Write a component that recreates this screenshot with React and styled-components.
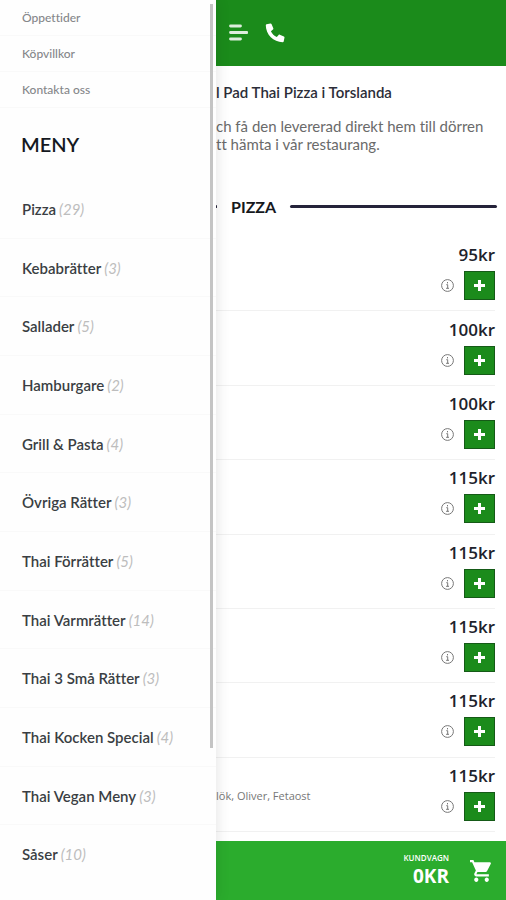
import React from "react";
import styled, { createGlobalStyle } from "styled-components";

const GlobalStyle = createGlobalStyle`
  *, *::before, *::after { box-sizing: border-box; }
  body { margin: 0; background: #fff; font-family: Lato, sans-serif; font-variant-ligatures: none; color: #1f2329; }
  button { font: inherit; padding: 0; border: 0; background: none; cursor: pointer; }
  a { color: inherit; text-decoration: none; }
  h1, h2, p, ul { margin: 0; padding: 0; }
  ul { list-style: none; }
`;

const Shell = styled.div`
  display: grid;
  grid-template-columns: 216px minmax(0, 1fr);
  min-height: 100vh;
`;

const Drawer = styled.nav`
  position: relative;
  z-index: 1;
  display: flex;
  flex-direction: column;
  padding-bottom: 17px;
  background: #fefefe;
  box-shadow: 0 0 14px rgba(0, 0, 0, 0.12);
`;

const ScrollThumb = styled.span`
  position: absolute;
  top: 4px;
  bottom: 152px;
  right: 3px;
  width: 3px;
  background: #c4c4c4;
`;

const InfoLink = styled.a`
  display: flex;
  align-items: center;
  height: 36px;
  padding: 0 22px;
  border-bottom: 1px solid #f9f9f9;
  font-size: 12px;
  font-weight: 500;
  color: #85878a;
`;

const MenuTitle = styled.h2`
  padding: 24px 21px 23px;
  font-size: 20px;
  line-height: 25px;
  font-weight: 600;
  color: #15191f;
`;

const Categories = styled.ul`
  flex: 1;
  display: flex;
  flex-direction: column;
`;

const Category = styled.li`
  flex: 1;
  display: flex;
  border-bottom: 1px solid #f9f9f9;

  &:last-child { border-bottom: 0; }
`;

const CategoryLink = styled.a`
  flex: 1;
  display: flex;
  align-items: center;
  gap: 3px;
  padding: 0 22px;
  font-size: 15px;
  font-weight: 600;
  color: #3a3e43;
  white-space: nowrap;
`;

const Count = styled.em`
  font-weight: 400;
  color: #bdbdbd;
`;

const Page = styled.div`
  display: flex;
  flex-direction: column;
  min-width: 0;
`;

const TopBar = styled.header`
  display: flex;
  align-items: center;
  gap: 17px;
  height: 66px;
  padding: 0 12px;
  background: #1b8b1b;
`;

const IconButton = styled.button`
  display: flex;
  color: #fff;
`;

const Intro = styled.section`
  padding: 16px 12px 0 0;
`;

const Heading = styled.h1`
  font-size: 15px;
  line-height: 20px;
  font-weight: 600;
  color: #2b2d38;
`;

const Lead = styled.p`
  padding-top: 15px;
  font-size: 15px;
  line-height: 18px;
  color: #6a6a6a;
  white-space: nowrap;
`;

const SectionTitle = styled.div`
  display: flex;
  align-items: center;
  gap: 14px;
  padding: 43px 9px 20px 0;

  &::before,
  &::after {
    content: "";
    height: 3px;
    border-radius: 2px;
    background: #25233a;
  }

  &::before { width: 1px; }
  &::after { flex: 1; }
`;

const SectionName = styled.h2`
  font-size: 16px;
  line-height: 21px;
  font-weight: 700;
  color: #16181d;
`;

const Products = styled.ul`
  flex: 1;
  display: flex;
  flex-direction: column;
  padding-right: 11px;
`;

const Product = styled.li`
  flex: 1;
  display: flex;
  align-items: center;
  justify-content: space-between;
  border-bottom: 1px solid #f1f1f1;
`;

const Toppings = styled.p`
  padding-top: 4px;
  font: 11px/16px "Open Sans", sans-serif;
  color: #777;
`;

const Buy = styled.div`
  display: flex;
  flex-direction: column;
  align-items: flex-end;
  gap: 6px;
  margin-left: auto;
  padding-bottom: 2px;
`;

const Price = styled.span`
  font: 600 17px/20px "Open Sans", sans-serif;
  color: #20222b;
`;

const Actions = styled.div`
  display: flex;
  align-items: center;
  gap: 10px;
`;

const InfoButton = styled.button`
  display: flex;
  color: #777;
`;

const AddButton = styled.button`
  && {
    display: flex;
    align-items: center;
    justify-content: center;
    width: 31px;
    height: 29px;
    border: 1px solid #155a17;
    background: #1b8b1b;
    color: #fff;
  }
`;

const CartBar = styled.footer`
  display: flex;
  align-items: center;
  justify-content: flex-end;
  height: 59px;
  margin-top: 9px;
  padding: 0 14px;
  background: #2bac2d;
`;

const CartButton = styled.button`
  && {
    display: flex;
    align-items: center;
    gap: 21px;
    color: #fff;
    text-align: right;
  }
`;

const CartText = styled.span`
  display: flex;
  flex-direction: column;
  font-family: "Open Sans", sans-serif;
`;

const CartLabel = styled.span`
  font-size: 8px;
  line-height: 11px;
  font-weight: 600;
`;

const CartTotal = styled.span`
  font-size: 19px;
  line-height: 26px;
  font-weight: 700;
`;

const MenuIcon = () => (
  <svg width="20" height="18" viewBox="0 0 20 18" fill="none" stroke="currentColor" strokeWidth="2.8" strokeLinecap="round" opacity="0.85" aria-hidden="true">
    <path d="M2.500 2H12.500M2.500 8.500H19M2.500 15H12.500" />
  </svg>
);

const PhoneIcon = () => (
  <svg width="20" height="20" viewBox="0 0 20 20" fill="currentColor" aria-hidden="true">
    <path d="M1.600 1.300 5.400.5c.5-.1.9.1 1.100.6l1.800 4.100c.2.4.1.9-.3 1.200L5.900 8.200c1.200 2.600 3.300 4.600 5.900 5.900l1.800-2.100c.3-.4.8-.5 1.200-.3l4.100 1.800c.5.2.7.7.6 1.100l-.8 3.800c-.1.5-.5.8-1 .8C8.500 19.200.8 11.500.8 2.300c0-.5.3-.9.8-1z" />
  </svg>
);

const InfoIcon = () => (
  <svg width="13" height="13" viewBox="0 0 13 13" fill="none" stroke="currentColor" aria-hidden="true">
    <circle cx="6.500" cy="6.500" r="5.900" />
    <path d="M5.300 5.700h1.400v3.600M5.100 9.300h2.900M6.500 3v1.400" />
  </svg>
);

const PlusIcon = () => (
  <svg width="11" height="11" viewBox="0 0 11 11" stroke="currentColor" strokeWidth="3" aria-hidden="true">
    <path d="M5.500 0v11M0 5.500h11" />
  </svg>
);

const CartIcon = () => (
  <svg width="22" height="22" viewBox="1 2 21 20" preserveAspectRatio="none" fill="currentColor" aria-hidden="true">
    <path d="M7 18c-1.100 0-1.990.9-1.990 2S5.900 22 7 22s2-.9 2-2-.9-2-2-2zM1 2v2h2l3.600 7.590-1.350 2.450c-.16.280-.25.610-.25.960 0 1.100.9 2 2 2h12v-2H7.420c-.14 0-.25-.11-.25-.25l.03-.12.9-1.630h7.450c.75 0 1.410-.41 1.750-1.030l3.580-6.490A1 1 0 0 0 20 4H5.210l-.94-2H1zm16 16c-1.100 0-1.990.9-1.990 2s.89 2 1.990 2 2-.9 2-2-.9-2-2-2z" />
  </svg>
);

const infoLinks = ["Öppettider", "Köpvillkor", "Kontakta oss"];

const categories = [
  ["Pizza", 29],
  ["Kebabrätter", 3],
  ["Sallader", 5],
  ["Hamburgare", 2],
  ["Grill & Pasta", 4],
  ["Övriga Rätter", 3],
  ["Thai Förrätter", 5],
  ["Thai Varmrätter", 14],
  ["Thai 3 Små Rätter", 3],
  ["Thai Kocken Special", 4],
  ["Thai Vegan Meny", 3],
  ["Såser", 10],
];

const products = [
  { price: 95 },
  { price: 100 },
  { price: 100 },
  { price: 115 },
  { price: 115 },
  { price: 115 },
  { price: 115 },
  { price: 115, toppings: "lök, Oliver, Fetaost" },
];

export default function App() {
  return (
    <>
      <GlobalStyle />
      <Shell>
        <Drawer>
          {infoLinks.map((label) => (
            <InfoLink href="#" key={label}>{label}</InfoLink>
          ))}
          <MenuTitle>MENY</MenuTitle>
          <Categories>
            {categories.map(([name, count]) => (
              <Category key={name}>
                <CategoryLink href="#">
                  {name} <Count>({count})</Count>
                </CategoryLink>
              </Category>
            ))}
          </Categories>
          <ScrollThumb />
        </Drawer>
        <Page>
          <TopBar>
            <IconButton aria-label="Meny"><MenuIcon /></IconButton>
            <IconButton aria-label="Ring oss"><PhoneIcon /></IconButton>
          </TopBar>
          <Intro>
            <Heading>l Pad Thai Pizza i Torslanda</Heading>
            <Lead>
              ch få den levererad direkt hem till dörren
              <br />
              tt hämta i vår restaurang.
            </Lead>
          </Intro>
          <SectionTitle>
            <SectionName>PIZZA</SectionName>
          </SectionTitle>
          <Products>
            {products.map(({ price, toppings }, i) => (
              <Product key={i}>
                {toppings && <Toppings>{toppings}</Toppings>}
                <Buy>
                  <Price>{price}kr</Price>
                  <Actions>
                    <InfoButton aria-label="Information"><InfoIcon /></InfoButton>
                    <AddButton aria-label="Lägg till"><PlusIcon /></AddButton>
                  </Actions>
                </Buy>
              </Product>
            ))}
          </Products>
          <CartBar>
            <CartButton>
              <CartText>
                <CartLabel>KUNDVAGN</CartLabel>
                <CartTotal>0KR</CartTotal>
              </CartText>
              <CartIcon />
            </CartButton>
          </CartBar>
        </Page>
      </Shell>
    </>
  );
}
